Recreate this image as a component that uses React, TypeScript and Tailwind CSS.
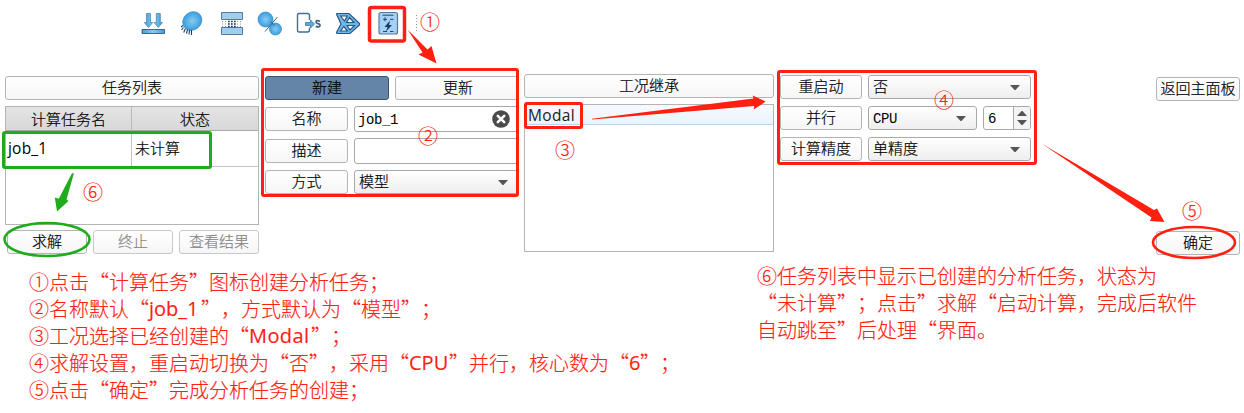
import type { ReactNode } from "react";

const serifUi = "font-['Liberation_Serif','Noto_Sans_CJK_SC',sans-serif]";
const sansUi = "font-['Open_Sans','Noto_Sans_CJK_SC',sans-serif]";
const plainButton = "border-[#b4b4b4] bg-gradient-to-b from-white to-[#f6f6f6] text-black";
const disabledButton = "border-[#c9c9c9] bg-gradient-to-b from-white to-[#f6f6f6] text-[#858585]";
const activeButton = "border-[#365575] bg-[#6485a7] text-black";

function Button({ children, className = "", look = plainButton }: { children: ReactNode; className?: string; look?: string }) {
  return (
    <div
      className={`flex h-6 shrink-0 items-center justify-center rounded-[3px] border text-[15px] leading-none font-light whitespace-nowrap [-webkit-text-stroke:0.2px] ${look} ${className}`}
    >
      {children}
    </div>
  );
}

function Caret({ up = false }: { up?: boolean }) {
  return (
    <svg width="10" height="5" viewBox="0 0 10 5" className="shrink-0">
      <path d={up ? "M0 5h10L5.5 0h-1z" : "M0 0h10L5.5 5h-1z"} fill="#555" />
    </svg>
  );
}

function Combo({ children, className = "pr-[10px]", latin = false }: { children: ReactNode; className?: string; latin?: boolean }) {
  return (
    <div
      className={`flex h-[24px] items-center justify-between rounded-[3px] border border-[#a9a9a9] bg-gradient-to-b from-white to-[#eeeeee] pl-1 text-[15px] leading-none font-light text-black ${className}`}
    >
      <span className={latin ? "translate-y-px text-[14px] tracking-[-0.4px] font-['Liberation_Mono',monospace] font-normal" : "[-webkit-text-stroke:0.2px]"}>{children}</span>
      <Caret />
    </div>
  );
}

function Toolbar() {
  return (
    <header className="flex h-[74px] items-start pt-[11px] pl-[141px]">
      <svg width="280" height="26" viewBox="141 11 280 26">
        <defs>
          <radialGradient id="ball">
            <stop offset="0" stopColor="#8cc9f3" />
            <stop offset="1" stopColor="#35a0df" />
          </radialGradient>
          <linearGradient id="plate">
            <stop offset="0" stopColor="#3b9edb" />
            <stop offset=".5" stopColor="#8acaf2" />
            <stop offset="1" stopColor="#3b9edb" />
          </linearGradient>
        </defs>
        <g fill="url(#plate)" stroke="#3e6289" strokeWidth=".8">
          <path d="M146.500 13.500h4v9h2.200l-4.200 5-4.200-5h2.200zM156.300 13.500h4v9h2.200l-4.200 5-4.200-5h2.200z" stroke="#4a86b8" />
          <path d="M142 29.500h22.500v4H142z" stroke="#2c4665" />
        </g>
        <ellipse cx="192.300" cy="21" rx="10" ry="8.800" transform="rotate(-40 192.300 21)" fill="url(#ball)" stroke="#438fc6" strokeWidth=".8" />
        <path d="M183 25.500l-2 1.500M183.500 27.500l-2 2.500M185.500 28.500l-1.800 4M187.500 29.500l-1 4M189.500 30l-.5 4.500M191.500 30v5" stroke="#223a60" strokeWidth="1.100" />
        <path d="M221.500 12.500h21v7h-21zM221.500 27.500h21v7h-21z" fill="#a1cdf1" stroke="#55789e" />
        <path d="M222 21.500h20M222 24h20M222 26.500h20" stroke="#777" strokeWidth=".8" strokeDasharray="1 2" />
        <path d="M228 21.500h8M228 24h8M228 26.500h8" stroke="#183b67" strokeWidth="1.500" strokeDasharray="1.700 1.300" />
        <circle cx="265.500" cy="19.500" r="7.500" fill="url(#ball)" stroke="#3389c4" strokeWidth=".7" />
        <circle cx="275.500" cy="29" r="6" fill="url(#ball)" stroke="#3389c4" strokeWidth=".7" />
        <path d="M265 31.500l12.500-14.500M270.500 21.500l4 4" stroke="#435d80" strokeWidth="1" />
        <path d="M309.500 20v-4.500q0-2-2-2h-8.500q-1.500 0-1.500 2v14.500q0 2 1.500 2h8.500q2 0 2-2v-2.500" fill="none" stroke="#416e9b" strokeWidth="1.400" />
        <path d="M305.500 22.500h5v-2.500l4 4-4 4v-2.500h-5z" fill="#57aee2" stroke="#416e9b" strokeWidth=".8" />
        <path d="M320 21.200q-4-1.500-4 .8 0 1.200 2 1.600 2.200.5 2 2-.3 2.200-4.200.8" fill="none" stroke="#3e6489" strokeWidth="1.700" />
        <path fillRule="evenodd" d="M336.500 14q0-.5 1-.5h11.500l10.500 10v1.500l-9.500 8.500h-12.500q-1 0-1-1l4.500-8.500zM340.500 16l4 5 2.800-5zM349.500 17.500l-3 5h7.500zM347 25.500l3 4.500 4.500-4.500zM343.800 26.500l-3.300 4.500h7z" fill="#6bb8ec" stroke="#2b5680" strokeWidth="1.200" />
        <rect x="379" y="12.500" width="18.500" height="21.500" rx="2" fill="#a5d1f4" stroke="#53789d" strokeWidth="1.200" />
        <path d="M382.500 15.200h11M383 19.300h4M385 17.300v4M390 19.300h3.500M383 31.500h4M390 31.500h3.500" stroke="#23466f" strokeWidth="1" />
        <path d="M390 20.500l-5.500 6.500h3l-1.500 4.500 6-6.500h-3z" fill="#183b67" />
        <path d="M416.500 15v18" stroke="#9c9c9c" strokeDasharray="1 2" />
      </svg>
    </header>
  );
}

function TaskPanel() {
  return (
    <section className="flex w-[254px] flex-col pt-[2px]">
      <Button>任务列表</Button>
      <div className={`mt-[6px] h-[119px] border border-[#b4b4b4] text-[15px] text-black ${sansUi}`}>
        <div className="grid h-6 grid-cols-[126px_1fr] border-b border-[#aaa] bg-gradient-to-b from-[#e4e4e4] to-[#d8d8d8] leading-[24px] font-light [-webkit-text-stroke:0.2px]">
          <div className="border-r border-[#b8b8b8] text-center">计算任务名</div>
          <div className="text-center">状态</div>
        </div>
        <div className="grid h-[36px] grid-cols-[126px_1fr] border-b border-[#c4c4c4] leading-[34px]">
          <div className="border-r border-[#c4c4c4] pl-[2px] text-[15.500px] tracking-[0.2px]">job_1</div>
          <div className="pl-[3px] font-light [-webkit-text-stroke:0.2px]">未计算</div>
        </div>
      </div>
      <div className="mt-[5px] flex gap-[6px] pl-[2px]">
        <Button className="w-20">求解</Button>
        <Button className="w-20" look={disabledButton}>终止</Button>
        <Button className="w-20" look={disabledButton}>查看结果</Button>
      </div>
    </section>
  );
}

function JobPanel() {
  return (
    <section className="mr-[2px] ml-[6px] flex w-[252px] flex-col overflow-hidden pt-[2px]">
      <div className="flex gap-[6px]">
        <Button className="w-[124px]" look={activeButton}>新建</Button>
        <Button className="w-[126px]">更新</Button>
      </div>
      <div className="mt-[6px] flex items-center gap-[6px]">
        <Button className="w-[83px]">名称</Button>
        <div className="flex h-[26px] w-[168px] shrink-0 items-center justify-between rounded-[3px] border border-[#a9a9a9] pr-[11px] pl-[3px]">
          <span className="translate-y-px font-['Liberation_Mono',monospace] text-[14px] leading-none tracking-[-0.4px] text-black">job_1</span>
          <svg width="18" height="18" viewBox="0 0 18 18">
            <circle cx="9" cy="9" r="8.800" fill="#4b4b4b" />
            <path d="M5.800 5.800l6.400 6.400M12.200 5.800l-6.400 6.400" stroke="#fff" strokeWidth="2.600" strokeLinecap="round" />
          </svg>
        </div>
      </div>
      <div className="mt-[6px] flex items-center gap-[6px]">
        <Button className="w-[83px]">描述</Button>
        <div className="h-[26px] w-[168px] shrink-0 rounded-[3px] border border-[#a9a9a9]" />
      </div>
      <div className="mt-[6px] flex items-center gap-[6px]">
        <Button className="w-[83px]">方式</Button>
        <Combo className="w-[168px] shrink-0 pr-[13px]">模型</Combo>
      </div>
    </section>
  );
}

function CasePanel() {
  return (
    <section className="ml-[5px] flex w-[250px] flex-col">
      <Button>工况继承</Button>
      <div className="mt-[6px] h-[148px] border border-[#b4b4b4]">
        <div className={`h-5 border-b border-[#b5d8f0] bg-gradient-to-b from-[#f6fafe] to-[#e9f4fd] pl-[3px] text-[15.500px] leading-[20px] tracking-[0.35px] text-[#222] ${sansUi}`}>Modal</div>
      </div>
    </section>
  );
}

function SolverPanel() {
  return (
    <section className="ml-[6px] flex w-[251px] flex-col gap-[7px] pt-px">
      <div className="flex gap-[6px]">
        <Button className="w-[82px]">重启动</Button>
        <Combo className="w-[163px] pr-[10px]">否</Combo>
      </div>
      <div className="flex gap-[6px]">
        <Button className="w-[82px]">并行</Button>
        <Combo className="w-[109px] pr-[10px]" latin>CPU</Combo>
        <div className="flex h-6 w-12 overflow-hidden rounded-[3px] border border-[#a9a9a9]">
          <span className="flex-1 pl-1 font-['Liberation_Mono',monospace] text-[14px] leading-[25px] text-black">6</span>
          <div className="flex w-[17px] flex-col items-center justify-center gap-1 border-l border-[#a9a9a9] bg-[#f4f4f4]">
            <Caret up />
            <Caret />
          </div>
        </div>
      </div>
      <div className="flex gap-[6px]">
        <Button className="w-[82px]">计算精度</Button>
        <Combo className="w-[163px] pr-[10px]">单精度</Combo>
      </div>
    </section>
  );
}

function Latin({ children, className = "" }: { children: ReactNode; className?: string }) {
  return <span className={`inline-block h-[27px] align-top font-['Open_Sans'] leading-[27px] font-normal ${className}`}>{children}</span>;
}

function Line({ children }: { children: ReactNode }) {
  return <p className="h-[27px]">{children}</p>;
}

function Notes() {
  return (
    <section className="flex pt-[2px] font-['Noto_Sans_CJK_SC',sans-serif] text-[20px] leading-[27px] font-light whitespace-nowrap text-[#ff2010] [font-kerning:none] [text-spacing-trim:space-all]">
      <div className="w-[728px] pt-[6px] pl-[29px] [-webkit-text-stroke:0.15px]">
        <Line>①点击“计算任务”图标创建分析任务；</Line>
        <Line>②名称默认“<Latin className="w-[52px]">job_1</Latin>”，方式默认为“模型”；</Line>
        <Line>③工况选择已经创建的“<Latin className="w-[62px] tracking-[0.4px]">Modal</Latin>”；</Line>
        <Line>④求解设置，重启动切换为“否”，采用“<Latin className="w-[40px]">CPU</Latin>”并行，核心数为“<Latin className="w-[11px]">6</Latin>”；</Line>
        <Line>⑤点击“确定”完成分析任务的创建；</Line>
      </div>
      <div className="pl-[29px] [-webkit-text-stroke:0.15px]">
        <Line>⑥任务列表中显示已创建的分析任务，状态为</Line>
        <Line>“未计算”；点击”求解“启动计算，完成后软件</Line>
        <Line>自动跳至”后处理“界面。</Line>
      </div>
    </section>
  );
}

function Annotations() {
  return (
    <div className="pointer-events-none absolute inset-0 font-['Noto_Sans_CJK_SC',sans-serif] text-[20px] leading-5 font-light text-[#ff2010] [-webkit-text-stroke:0.15px]">
      <svg width="1244" height="413" viewBox="0 0 1244 413" className="absolute inset-0">
        <g fill="none" stroke="#ff2010" strokeWidth="3">
          <rect x="369.500" y="7.500" width="35" height="33.500" rx="2" strokeWidth="3.500" />
          <rect x="262.500" y="69.500" width="255" height="126" rx="1.500" />
          <rect x="525.500" y="103.500" width="56" height="24" rx="1.500" />
          <rect x="778.500" y="71.500" width="257" height="92" rx="1.500" />
          <ellipse cx="1194" cy="242.500" rx="41" ry="15.500" strokeWidth="2.600" />
        </g>
        <g fill="#ff2010">
          <path d="M407.500 29.500l20 20 4-3.500 5 17.500-18-9 4-2z" />
          <path d="M592 118.700l161.500-20.300-.8-3 13 6.200-12 8 .5-3.500-162 13.500z" />
          <path d="M1041.500 143.500l112.500 66.500 3-1.500 7.500 13.500-14.500-1 1.500-3.500z" />
        </g>
        <g fill="none" stroke="#1fac1c" strokeWidth="3">
          <rect x="3.500" y="132.500" width="207" height="35" rx="1.500" />
          <ellipse cx="47" cy="239.500" rx="42.500" ry="16.500" strokeWidth="2.600" />
        </g>
        <path d="M74 173l-7.500 26.500 2 1.500-11.500 10.500-2.200-14 4 1.200 13-25.200z" fill="#1fac1c" />
      </svg>
      <span className="absolute top-[12px] left-[420px]">①</span>
      <span className="absolute top-[126px] left-[418px]">②</span>
      <span className="absolute top-[140px] left-[555px]">③</span>
      <span className="absolute top-[90px] left-[934px]">④</span>
      <span className="absolute top-[201px] left-[1182px]">⑤</span>
      <span className="absolute top-[182px] left-[83px]">⑥</span>
    </div>
  );
}

export default function App() {
  return (
    <div className="relative h-[413px] w-[1244px] overflow-hidden bg-white">
      <Toolbar />
      <main className={`flex h-[186px] pl-[5px] ${serifUi}`}>
        <TaskPanel />
        <JobPanel />
        <CasePanel />
        <SolverPanel />
        <section className="ml-[125px] flex w-[84px] flex-col justify-between pt-[3px] pb-[5px]">
          <Button>返回主面板</Button>
          <Button>确定</Button>
        </section>
      </main>
      <Notes />
      <Annotations />
    </div>
  );
}
